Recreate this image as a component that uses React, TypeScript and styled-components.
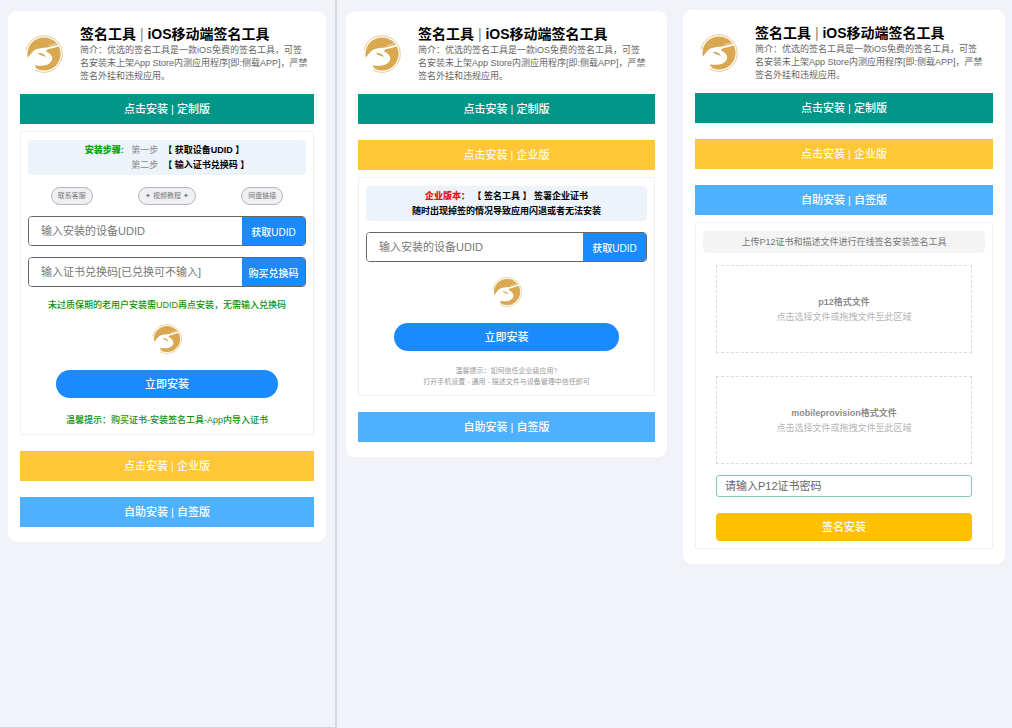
import React from 'react';
import styled, { createGlobalStyle, css } from 'styled-components';

const GlobalStyle = createGlobalStyle`
  * { box-sizing: border-box; }
  body {
    margin: 0;
    background: #f2f3f8;
    color: #000;
    font-family: "Liberation Sans", "Noto Sans CJK SC", sans-serif;
  }
  button, input { font-family: inherit; margin: 0; }
  p, h1 { margin: 0; }
`;

const Page = styled.main`
  display: grid;
  grid-template-columns: 337fr 338fr 337fr;
  min-height: 100vh;
`;

const Column = styled.section<{ $top: number; $left: number; $right: number; $framed?: boolean }>`
  min-width: 0;
  padding: ${p => p.$top}px ${p => p.$right}px 8px ${p => p.$left}px;
  ${p => p.$framed && css`
    border-right: 2px solid #d6d7de;
    border-bottom: 1px solid #d6d7de;
  `}
`;

const Card = styled.article`
  padding: 13px 12px 15px;
  border-radius: 9px;
  background: #fff;
`;

const Header = styled.header`
  display: flex;
  align-items: center;
  gap: 17px;
  padding-left: 5px;
  margin: 0 -8px 11px 0;
`;

const Title = styled.h1`
  font-size: 14px;
  line-height: 20px;
  font-weight: 700;
  white-space: nowrap;

  span { font-weight: 400; color: #888; }
`;

const Intro = styled.p`
  font-size: 9px;
  line-height: 13px;
  color: #666;
  white-space: nowrap;
`;

const barColors = { teal: '#009688', yellow: '#ffc636', blue: '#4db1ff' };

const Bar = styled.button<{ $tone: keyof typeof barColors }>`
  display: block;
  width: 100%;
  height: 30px;
  padding: 0;
  border: 0;
  background: ${p => barColors[p.$tone]};
  color: ${p => (p.$tone === 'yellow' ? '#fffbe8' : '#fff')};
  font-size: 11px;
  font-weight: 500;
  line-height: 30px;

  & + &, div + & { margin-top: 16px; }
`;

const Panel = styled.div`
  display: flex;
  flex-direction: column;
  align-items: center;
  margin-top: 7px;
  padding: 8px 7px 7px;
  border: 1px solid #f1f2f4;
`;

const Notice = styled.div`
  display: flex;
  justify-content: center;
  align-self: stretch;
  padding: 3px 0 2px;
  border-radius: 4px;
  background: #ecf3fa;
  font-size: 9px;
  line-height: 15px;
  font-weight: 700;
  text-align: center;
  white-space: pre;
`;

const Steps = styled.div`
  text-align: left;
  span { font-weight: 400; color: #888; }
`;

const Mark = styled.strong<{ $color: string }>`
  color: ${p => p.$color};
`;

const Links = styled.nav`
  display: flex;
  justify-content: space-around;
  align-self: stretch;
  margin-top: 12px;
`;

const Pill = styled.a`
  height: 18px;
  padding: 0 6px;
  border: 1px solid #b4b6ba;
  border-radius: 9px;
  background: #eff0f3;
  color: #777;
  font-size: 7px;
  line-height: 16px;
  text-decoration: none;
  white-space: nowrap;
`;

const Field = styled.div`
  display: flex;
  align-self: stretch;
  height: 30px;
  margin-top: 11px;
  border: 1px solid #666;
  border-radius: 4px;
  overflow: hidden;
`;

const FieldInput = styled.input`
  flex: 1;
  min-width: 0;
  padding: 0 12px;
  border: 0;
  outline: 0;
  background: #fff;
  font-size: 11px;

  &::placeholder { color: #777; opacity: 1; }
`;

const FieldButton = styled.button`
  width: 63px;
  padding: 0;
  border: 0;
  background: #1a8afd;
  color: #fff;
  font-size: 10px;
  font-weight: 500;
  white-space: nowrap;
`;

const GreenText = styled.p<{ $gap: number }>`
  margin-top: ${p => p.$gap}px;
  color: #0a930a;
  font-size: 9px;
  line-height: 13px;
  font-weight: 500;
  white-space: nowrap;
`;

const Hint = styled.p`
  margin: 14px 0 1px;
  color: #999;
  font-size: 7px;
  line-height: 11px;
  text-align: center;
`;

const LogoSpot = styled.div<{ $gap: number }>`
  height: 30px;
  margin-top: ${p => p.$gap}px;
`;

const InstallButton = styled.button`
  width: 80%;
  height: 28px;
  margin-top: 16px;
  padding: 0 0 2px;
  border: 0;
  border-radius: 14px;
  background: #1a8afd;
  color: #fff;
  font-size: 11px;
  font-weight: 500;
`;

const GrayNotice = styled.p`
  align-self: stretch;
  border-radius: 5px;
  background: #f4f4f4;
  color: #777;
  font-size: 9px;
  line-height: 22px;
  text-align: center;
`;

const SignForm = styled.form`
  display: flex;
  flex-direction: column;
  align-self: stretch;
  padding: 12px 13px 0;
`;

const DropZone = styled.label`
  display: flex;
  flex-direction: column;
  align-items: center;
  justify-content: center;
  height: 88px;
  padding-top: 2px;
  border: 1px dashed #ddd;
  color: #b4b4b4;
  font-size: 9px;
  line-height: 15px;

  strong { color: #8c8c8c; }
  & + & { margin-top: 23px; }
`;

const FileInput = styled.input`
  position: absolute;
  width: 1px;
  height: 1px;
  opacity: 0;
`;

const PasswordInput = styled.input`
  height: 22px;
  margin-top: 11px;
  padding: 0 8px;
  border: 1px solid #8cc9b8;
  border-radius: 3px;
  outline: 0;
  font-size: 11px;

  &::placeholder { color: #666; opacity: 1; }
`;

const SignButton = styled.button`
  height: 28px;
  margin-top: 16px;
  padding: 0 0 2px;
  border: 0;
  border-radius: 4px;
  background: #fdc102;
  color: #fff;
  font-size: 11px;
  font-weight: 500;
`;

const LogoDrawing = styled.svg`
  display: block;
  flex-shrink: 0;
`;

function Logo({ size }: { size: number }) {
  return (
    <LogoDrawing width={size} height={size} viewBox="0 0 38 38" aria-hidden="true">
      <path d="M1 15.500A18.300 18.300 0 1 1 10 35" fill="none" stroke="#e6c88f" strokeWidth="1" />
      <circle cx="19" cy="19" r="16.600" fill="#d9a850" />
      <path
        d="M0 25C4 22.500 5 18.500 9 15.500C13 12.800 18 13.300 22 12.600C27 11.700 31 9.600 36 9.500C33.500 11.800 29 12.800 25 13.800C21.500 14.700 20 15.500 22 17C27 19.500 28.500 23.500 26 26.800C22.500 31.200 16 31.500 10 30.200C10 31.500 11 32.800 12.500 34L5 35L0 29Z"
        fill="#fff"
      />
      <path d="M13 18.200C16.500 17.600 19.500 19 21 22C18 20.800 15 20.500 13 18.200Z" fill="#d9a850" />
      <path d="M24 10.800C28 10 31 8.500 34.500 7.600" fill="none" stroke="#f6e6c6" strokeWidth="0.800" />
    </LogoDrawing>
  );
}

function AppHeader() {
  return (
    <Header>
      <Logo size={38} />
      <div>
        <Title>签名工具 <span>|</span> iOS移动端签名工具</Title>
        <Intro>
          简介：优选的签名工具是一款iOS免费的签名工具，可签<br />
          名安装未上架App Store内测应用程序[即:侧载APP]，严禁<br />
          签名外挂和违规应用。
        </Intro>
      </div>
    </Header>
  );
}

const CustomBar = () => <Bar type="button" $tone="teal">点击安装 | 定制版</Bar>;
const EnterpriseBar = () => <Bar type="button" $tone="yellow">点击安装 | 企业版</Bar>;
const SelfSignBar = () => <Bar type="button" $tone="blue">自助安装 | 自签版</Bar>;

function ActionField({ placeholder, action }: { placeholder: string; action: string }) {
  return (
    <Field>
      <FieldInput type="text" placeholder={placeholder} aria-label={placeholder} />
      <FieldButton type="button">{action}</FieldButton>
    </Field>
  );
}

function CustomCard() {
  return (
    <Card>
      <AppHeader />
      <CustomBar />
      <Panel>
        <Notice>
          <Mark $color="#0fa30f">安装步骤:   </Mark>
          <Steps>
            <div><span>第一步</span>  【 获取设备UDID 】</div>
            <div><span>第二步</span>  【 输入证书兑换码 】</div>
          </Steps>
        </Notice>
        <Links>
          <Pill href="#service">联系客服</Pill>
          <Pill href="#video">✦ 视频教程 ✦</Pill>
          <Pill href="#drive">网盘链接</Pill>
        </Links>
        <ActionField placeholder="输入安装的设备UDID" action="获取UDID" />
        <ActionField placeholder="输入证书兑换码[已兑换可不输入]" action="购买兑换码" />
        <GreenText $gap={12}>未过质保期的老用户安装需UDID再点安装，无需输入兑换码</GreenText>
        <LogoSpot $gap={12}><Logo size={30} /></LogoSpot>
        <InstallButton type="button">立即安装</InstallButton>
        <GreenText $gap={16}>温馨提示：购买证书-安装签名工具-App内导入证书</GreenText>
      </Panel>
      <EnterpriseBar />
      <SelfSignBar />
    </Card>
  );
}

function EnterpriseCard() {
  return (
    <Card>
      <AppHeader />
      <CustomBar />
      <EnterpriseBar />
      <Panel>
        <Notice>
          <div>
            <div><Mark $color="#f01414">企业版本：</Mark> 【 签名工具 】 签署企业证书</div>
            <div>随时出现掉签的情况导致应用闪退或者无法安装</div>
          </div>
        </Notice>
        <ActionField placeholder="输入安装的设备UDID" action="获取UDID" />
        <LogoSpot $gap={15}><Logo size={30} /></LogoSpot>
        <InstallButton type="button">立即安装</InstallButton>
        <Hint>
          温馨提示：如何信任企业级应用?<br />
          打开手机设置 - 通用 - 描述文件与设备管理中信任即可
        </Hint>
      </Panel>
      <SelfSignBar />
    </Card>
  );
}

function SelfSignCard() {
  return (
    <Card>
      <AppHeader />
      <CustomBar />
      <EnterpriseBar />
      <SelfSignBar />
      <Panel>
        <GrayNotice>上传P12证书和描述文件进行在线签名安装签名工具</GrayNotice>
        <SignForm>
          {['p12', 'mobileprovision'].map(kind => (
            <DropZone key={kind}>
              <FileInput type="file" accept={`.${kind}`} />
              <strong>{kind}格式文件</strong>
              点击选择文件或拖拽文件至此区域
            </DropZone>
          ))}
          <PasswordInput type="password" placeholder="请输入P12证书密码" aria-label="请输入P12证书密码" />
          <SignButton type="submit">签名安装</SignButton>
        </SignForm>
      </Panel>
    </Card>
  );
}

export default function App() {
  return (
    <>
      <GlobalStyle />
      <Page>
        <Column $top={11} $left={8} $right={9} $framed><CustomCard /></Column>
        <Column $top={11} $left={9} $right={8}><EnterpriseCard /></Column>
        <Column $top={10} $left={8} $right={7}><SelfSignCard /></Column>
      </Page>
    </>
  );
}
